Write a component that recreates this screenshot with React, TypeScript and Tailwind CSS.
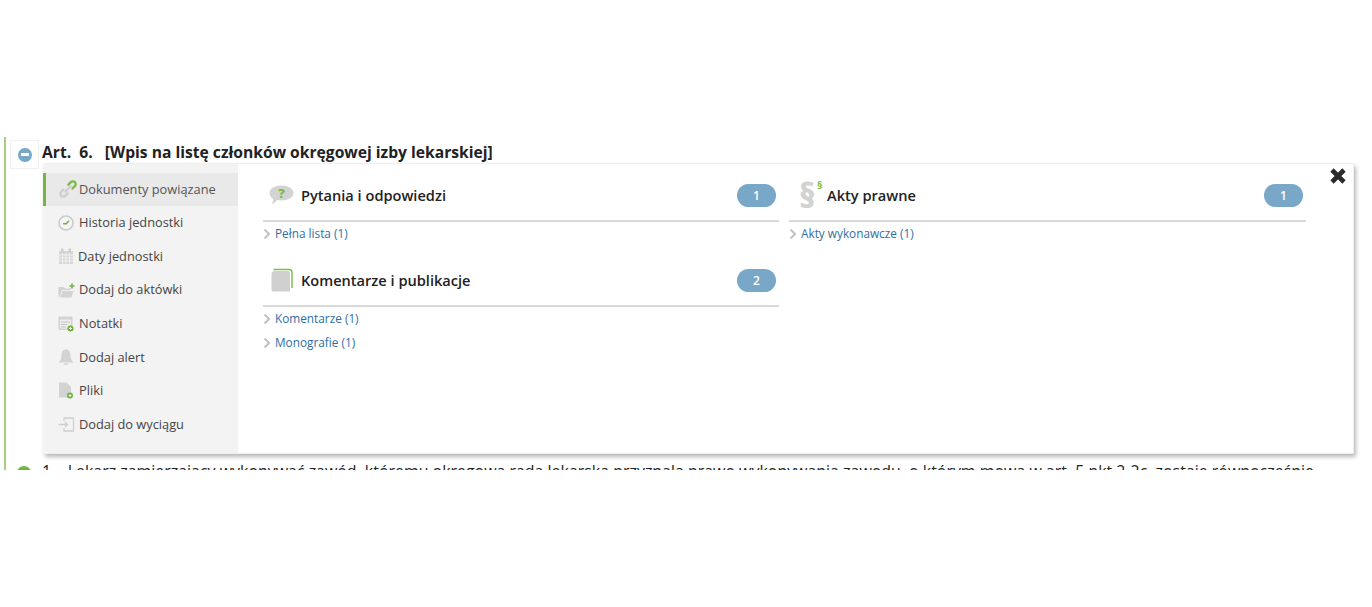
const sidebarFont = "font-['Open_Sans',sans-serif]";

function LinkIcon() {
  return (
    <svg width="18" height="18" viewBox="0 0 18 18" fill="none" strokeLinecap="round">
      <path d="M4.5 9.5 L2.2 11.8 a2.8 2.8 0 0 0 4 4 L8.6 13.4" stroke="#cfcfcf" strokeWidth="2.4" />
      <path d="M6.4 11.6 L11.6 6.4" stroke="#cfcfcf" strokeWidth="2.4" />
      <path d="M9.4 4.6 L11.8 2.2 a2.8 2.8 0 0 1 4 4 L13.5 8.5" stroke="#7dbb45" strokeWidth="2.4" />
    </svg>
  );
}
function ClockIcon() {
  return (
    <svg width="16" height="16" viewBox="0 0 16 16" fill="none">
      <circle cx="8" cy="8" r="7" fill="#f5f5f5" stroke="#c9c9c9" strokeWidth="1.6" />
      <path d="M5 8.8 H8.2 L11 5.8" stroke="#6fae3e" strokeWidth="1.4" />
    </svg>
  );
}
function CalendarIcon() {
  return (
    <svg width="16" height="17" viewBox="0 0 16 17">
      <path d="M1 3 H15 V16 H1 Z" fill="#d6d6d6" />
      <rect x="3" y="0.5" width="2.5" height="4" fill="#cfcfcf" />
      <rect x="10.5" y="0.5" width="2.5" height="4" fill="#cfcfcf" />
      <path d="M1 7 H15 M1 10 H15 M1 13 H15 M4.5 5 V16 M8 5 V16 M11.5 5 V16" stroke="#f3f3f3" strokeWidth="0.9" />
    </svg>
  );
}
function FolderIcon() {
  return (
    <svg width="17" height="15" viewBox="0 0 17 15">
      <path d="M0.5 4 H5.5 L7 5.5 H13 V7 H4 L1.8 14 H0.5 Z" fill="#d3d3d3" />
      <path d="M4.6 8 H15.5 L13.5 14.5 H2.4 Z" fill="#d3d3d3" />
      <path d="M14 0.5 V5.5 M11.5 3 H16.5" stroke="#74b544" strokeWidth="1.6" />
    </svg>
  );
}
function NotesIcon() {
  return (
    <svg width="16" height="17" viewBox="0 0 16 17">
      <path d="M0.5 1.5 H14.5 V15 H2 a1.5 1.5 0 0 1 -1.5 -1.5 Z" fill="#d3d3d3" />
      <rect x="2" y="4.5" width="11" height="9" fill="#eeeeee" />
      <path d="M3 7 H12 M3 9.5 H9 M3 12 H8" stroke="#c4c4c4" strokeWidth="1" />
      <circle cx="12.5" cy="13.5" r="3" fill="#6fae3e" />
      <path d="M11 13.5 H14 M12.5 12 V15" stroke="#fff" strokeWidth="1" />
    </svg>
  );
}
function BellIcon() {
  return (
    <svg width="16" height="17" viewBox="0 0 16 17">
      <path d="M8 0.5 c3.2 0 4.5 2.5 4.5 5.5 c0 3.5 1 5.5 3 7.5 H0.5 c2 -2 3 -4 3 -7.5 C3.5 3 4.8 0.5 8 0.5 Z" fill="#d3d3d3" />
      <path d="M5.5 14.5 H10.5 C10 16.5 6 16.5 5.5 14.5 Z" fill="#d3d3d3" />
    </svg>
  );
}
function FileIcon() {
  return (
    <svg width="16" height="17" viewBox="0 0 16 17">
      <path d="M1 0.5 H8.5 L13 5 V15.5 H1 Z" fill="#d3d3d3" />
      <circle cx="12" cy="13.5" r="3" fill="#6fae3e" />
      <path d="M10.5 13.5 H13.5 M12 12 V15" stroke="#fff" strokeWidth="1" />
    </svg>
  );
}
function ExtractIcon() {
  return (
    <svg width="17" height="15" viewBox="0 0 17 15" fill="none" stroke="#cfcfcf" strokeWidth="1.3">
      <path d="M6 4 V1 H15.5 V14 H6 V11" />
      <path d="M0.5 7.5 H9.5 M7 5 L9.5 7.5 L7 10" />
    </svg>
  );
}
function QuestionIcon() {
  return (
    <svg width="25" height="20" viewBox="0 0 25 20" className="-ml-[1px]">
      <path d="M12.5 0.5 C19 0.5 24.5 3.5 24.5 8 C24.5 12.5 19 15.5 12.5 15.5 C11 15.5 9.5 15.3 8.2 15 C7 16.8 5 18.5 2.5 19.3 C3.8 17.5 4.2 15.8 4.2 14 C2 12.5 0.5 10.5 0.5 8 C0.5 3.5 6 0.5 12.5 0.5 Z" fill="#d3d3d3" />
      <text x="12.5" y="13" textAnchor="middle" fontSize="13" fontWeight="800" fill="#7dbb45" fontFamily="Open Sans, sans-serif">?</text>
    </svg>
  );
}
function BookIcon() {
  return (
    <svg width="22" height="24" viewBox="0 0 22 24" fill="none">
      <path d="M2.5 1.5 H18 a3 3 0 0 1 3 3 V20" stroke="#7dbb45" strokeWidth="1.4" />
      <path d="M2.5 3 H17 a2 2 0 0 1 2 2 V23.5 H2.5 a2 2 0 0 1 -2 -2 V5 Z" fill="#d0d0d0" />
    </svg>
  );
}
function LawIcon() {
  return (
    <span className="relative block w-[22px] h-[28px]">
      <span className="absolute left-[2px] top-[-4px] text-[33px] leading-[38px] font-extrabold text-[#d2d2d2]">§</span>
      <span className="absolute left-[20px] top-[-3px] text-[11px] leading-[14px] font-bold text-[#7dbb45]">§</span>
    </span>
  );
}

const menu = [
  { label: "Dokumenty powiązane", icon: <LinkIcon />, active: true, gap: "gap-[2px]", left: "pl-[13px]" },
  { label: "Historia jednostki", icon: <ClockIcon />, gap: "gap-[4px]", left: "pl-[14px]" },
  { label: "Daty jednostki", icon: <CalendarIcon />, gap: "gap-[3px]", left: "pl-[14px]" },
  { label: "Dodaj do aktówki", icon: <FolderIcon />, gap: "gap-[4px]", left: "pl-[14px]" },
  { label: "Notatki", icon: <NotesIcon />, gap: "gap-[4px]", left: "pl-[14px]" },
  { label: "Dodaj alert", icon: <BellIcon />, gap: "gap-[4px]", left: "pl-[14px]" },
  { label: "Pliki", icon: <FileIcon />, gap: "gap-[4px]", left: "pl-[14px]" },
  { label: "Dodaj do wyciągu", icon: <ExtractIcon />, gap: "gap-[4px]", left: "pl-[14px]" },
];

function Section({ icon, title, count, links }: { icon: React.ReactNode; title: string; count: number; links: string[] }) {
  return (
    <section>
      <div className="h-[50px] flex items-center border-b-2 border-[#d9d9d9] pr-[3px] pb-[2px]">
        <div className="w-[38px] flex justify-center shrink-0">{icon}</div>
        <h3 className="flex-1 text-[14.6px] leading-[20px] font-semibold text-[#222222]">{title}</h3>
        <span className="w-[39px] h-[23px] mt-[1px] rounded-full bg-[#78a7c8] text-white text-[12px] font-semibold flex items-center justify-center">{count}</span>
      </div>
      <ul>
        {links.map((l) => (
          <li key={l} className="h-[24px] flex items-center text-[11.8px] text-[#2f6ea5]">
            <svg width="8" height="12" viewBox="0 0 8 12" fill="none" className="mr-[4px]">
              <path d="M1.5 1.5 L6 6 L1.5 10.5" stroke="#c4c4c4" strokeWidth="2.2" />
            </svg>
            {l}
          </li>
        ))}
      </ul>
    </section>
  );
}

export default function App() {
  return (
    <div className={`h-[607px] w-[1372px] overflow-hidden bg-white pt-[137px] ${sidebarFont}`}>
      <div className="relative ml-[4px] h-[333px] overflow-hidden border-l-2 border-[#a3d07f]">
        <div className="flex items-start h-[31px] pt-[3px] pl-[4px]">
          <div className="w-[29px] h-[29px] border border-[#f0f0f0] flex items-center justify-center mr-[3px] shrink-0">
            <span className="w-[14px] h-[14px] rounded-full bg-[#78a7c8] flex items-center justify-center">
              <span className="w-[8px] h-[3px] bg-white" />
            </span>
          </div>
          <h2 className="text-[15.65px] leading-[24px] font-bold text-[#222222] whitespace-pre">Art.  6.   [Wpis na listę członków okręgowej izby lekarskiej]</h2>
        </div>

        <div className="relative ml-[37px] mt-[-5px] w-[1311px] h-[291px] flex bg-white border border-[#eeeeee] border-l-0 shadow-[2px_3px_4px_rgba(0,0,0,0.28)] rounded-[2px]">
          <nav className="w-[195px] h-full bg-[#f3f3f3] pt-[8.5px] shrink-0">
            {menu.map((m) => (
              <div
                key={m.label}
                className={`h-[33.6px] flex items-center ${m.left} ${m.gap} text-[12.8px] ${m.active ? "bg-[#e9e9e9] border-l-[3px] border-[#74b544] text-[#555555]" : "text-[#444444]"}`}
              >
                <span className="w-[18px] flex justify-center shrink-0">{m.icon}</span>
                <span>{m.label}</span>
              </div>
            ))}
          </nav>

          <div className="flex-1 flex pl-[25px] pt-[8px] gap-[10px]">
            <div className="w-[516px]">
              <Section icon={<QuestionIcon />} title="Pytania i odpowiedzi" count={1} links={["Pełna lista (1)"]} />
              <div className="h-[11px]" />
              <Section icon={<BookIcon />} title="Komentarze i publikacje" count={2} links={["Komentarze (1)", "Monografie (1)"]} />
            </div>
            <div className="w-[517px]">
              <Section icon={<LawIcon />} title="Akty prawne" count={1} links={["Akty wykonawcze (1)"]} />
            </div>
          </div>

          <svg width="18" height="18" viewBox="0 0 18 18" className="absolute right-[6px] top-[3px]">
            <path d="M3 3 L15 15 M15 3 L3 15" stroke="#2b2b2b" strokeWidth="4.6" />
          </svg>
        </div>

        <div className="flex items-start pl-[11px] pt-[7px] text-[15.93px] leading-[20px] text-[#222222]">
          <span className="w-[14px] h-[14px] rounded-full bg-[#74b544] mt-[5px] mr-[11px] shrink-0" />
          <span className="whitespace-nowrap">
            1.&nbsp;&nbsp;&nbsp;Lekarz zamierzający wykonywać zawód, któremu okręgowa rada lekarska przyznała prawo wykonywania zawodu, o którym mowa w art. 5 pkt 2-2c, zostaje równocześnie
          </span>
        </div>
      </div>
    </div>
  );
}
